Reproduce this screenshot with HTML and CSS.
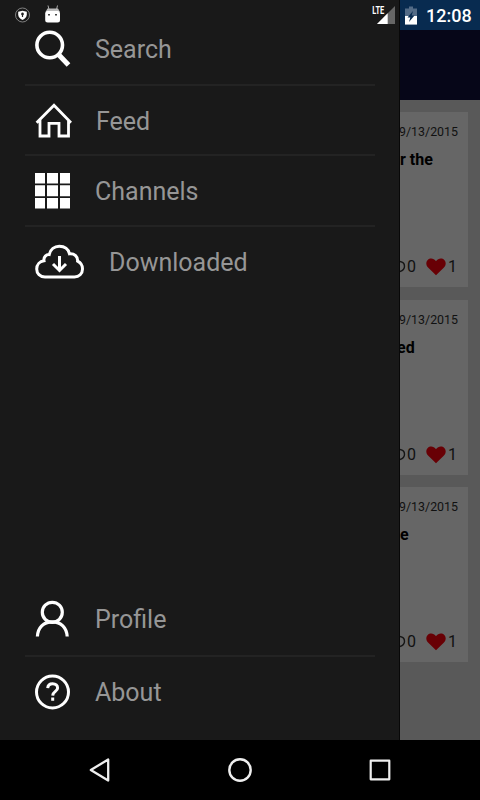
FILE: index.html
```html
<!DOCTYPE html>
<html lang="en">
<head>
    <meta charset="UTF-8">
    <title>Menu</title>
    <link rel="stylesheet" href="styles.css">
</head>
<body>
<div class="screen">
    <div class="main">
        <div class="drawer">
            <ul class="menu">
                <li class="search">
                    <svg width="36" height="38" viewBox="0 0 36 38" fill="none" stroke="#fff">
                        <circle cx="14.7" cy="15" r="12.8" stroke-width="3.6"/>
                        <path d="M23.5 24.5L33.5 35" stroke-width="5"/>
                    </svg>
                    <span>Search</span>
                </li>
                <li class="feed">
                    <svg width="37" height="36" viewBox="0 0 37 36" fill="none" stroke="#fff" stroke-width="2.8">
                        <path d="M1.6 20.8L19 3.2L36 20.8M5 18V34H14V21.3H24V34H33.5V18"/>
                    </svg>
                    <span>Feed</span>
                </li>
                <li class="channels">
                    <svg width="36" height="36" viewBox="0 0 36 36" fill="#fff">
                        <path d="M0 0h10v10.5H0zM12 0h11v10.5H12zM25 0h10v10.5H25zM0 12.3h10v11H0zM12 12.3h11v11H12zM25 12.3h10v11H25zM0 25h10v10.5H0zM12 25h11v10.5H12zM25 25h10v10.5H25z"/>
                    </svg>
                    <span>Channels</span>
                </li>
                <li class="downloaded">
                    <svg width="50" height="36" viewBox="0 0 50 36" fill="none" stroke="#fff" stroke-width="3">
                        <path d="M10 33C5 33 1.700 29.500 1.700 25C1.700 20.500 4.800 17.300 9 16.800C8.300 12.800 11.500 10.400 14.200 10.600C15.400 5.500 19.500 2.300 24.300 2.300C29.500 2.300 33.300 5.300 34.500 9.800C39.500 9.300 43 12.500 42.600 17.200C45.700 18.700 47.500 21.400 47.500 25C47.500 29.800 44 33 39.500 33Z"/>
                        <path d="M24.500 12V26M18 20L24.500 26.500L31 20"/>
                    </svg>
                    <span>Downloaded</span>
                </li>
            </ul>
            <ul class="menu bottom">
                <li class="profile">
                    <svg width="36" height="38" viewBox="0 0 36 38" fill="none" stroke="#fff" stroke-width="3.2">
                        <circle cx="17.300" cy="12.300" r="10"/>
                        <path d="M2.400 36.500C2.800 27.500 8.500 21.800 17.300 21.800C26 21.800 31.700 27.500 32.200 36.500"/>
                    </svg>
                    <span>Profile</span>
                </li>
                <li class="about">
                    <svg width="36" height="36" viewBox="0 0 36 36" fill="none" stroke="#fff" stroke-width="3">
                        <circle cx="17.500" cy="18" r="16"/>
                        <path d="M12.700 14.200C12.900 11.200 15 9.700 17.700 9.700C20.700 9.700 22.600 11.500 22.600 13.900C22.600 17.500 17.900 17.300 17.700 21.600M17.700 23.500V26.700"/>
                    </svg>
                    <span>About</span>
                </li>
            </ul>
        </div>
        <div class="page">
            <div class="top-strip"></div>
            <div class="header"></div>
            <div class="card">
                <p class="date">9/13/2015</p>
                <h2>r the</h2>
                <div class="counts">
                    <svg class="bubble" width="6" height="14" viewBox="0 0 6 14" fill="none" stroke="#151515" stroke-width="1.400"><path d="M0 1.500C6 2.500 6 9.500 0 11.500"/></svg>
                    <span class="replies">0</span>
                    <svg class="heart" width="20" height="18" viewBox="0 0 20 18" fill="#680005"><path d="M10 17.300L2.300 9.800C-.5 7 0 3.800 1.700 2C4-.2 7.800.2 10 3.200C12.200.2 16 -.2 18.300 2C20 3.800 20.500 7 17.700 9.800Z"/></svg>
                    <span>1</span>
                </div>
            </div>
            <div class="card">
                <p class="date">9/13/2015</p>
                <h2 class="cut">ed</h2>
                <div class="counts">
                    <svg class="bubble" width="6" height="14" viewBox="0 0 6 14" fill="none" stroke="#151515" stroke-width="1.400"><path d="M0 1.500C6 2.500 6 9.500 0 11.500"/></svg>
                    <span class="replies">0</span>
                    <svg class="heart" width="20" height="18" viewBox="0 0 20 18" fill="#680005"><path d="M10 17.300L2.300 9.800C-.5 7 0 3.800 1.700 2C4-.2 7.800.2 10 3.200C12.200.2 16 -.2 18.300 2C20 3.800 20.500 7 17.700 9.800Z"/></svg>
                    <span>1</span>
                </div>
            </div>
            <div class="card">
                <p class="date">9/13/2015</p>
                <h2>e</h2>
                <div class="counts">
                    <svg class="bubble" width="6" height="14" viewBox="0 0 6 14" fill="none" stroke="#151515" stroke-width="1.400"><path d="M0 1.500C6 2.500 6 9.500 0 11.500"/></svg>
                    <span class="replies">0</span>
                    <svg class="heart" width="20" height="18" viewBox="0 0 20 18" fill="#680005"><path d="M10 17.300L2.300 9.800C-.5 7 0 3.800 1.700 2C4-.2 7.800.2 10 3.200C12.200.2 16 -.2 18.300 2C20 3.800 20.500 7 17.700 9.800Z"/></svg>
                    <span>1</span>
                </div>
            </div>
        </div>
    </div>
    <div class="nav">
        <svg width="22" height="26" viewBox="0 0 22 26" fill="none" stroke="#eee" stroke-width="2.300" stroke-linejoin="round"><path d="M19.200 2.500V23.500L1.800 13Z"/></svg>
        <svg width="26" height="26" viewBox="0 0 26 26" fill="none" stroke="#eee" stroke-width="2.400"><circle cx="13" cy="13" r="10.700"/></svg>
        <svg width="22" height="22" viewBox="0 0 22 22" fill="none" stroke="#eee" stroke-width="2.200" stroke-linejoin="round"><path d="M1.700 1.700H20.300V20.300H1.700Z"/></svg>
    </div>
    <!-- system status icons, over the drawer -->
    <div class="status">
        <svg class="shield" width="16" height="16" viewBox="0 0 16 16">
            <circle cx="7.500" cy="8" r="7" fill="none" stroke="#999" stroke-width=".8"/>
            <path d="M7.500 3.700L11.800 4.700V7.500C11.800 10 10 12 7.500 13C5 12 3.200 10 3.200 7.500V4.700Z" fill="#fff"/>
            <path d="M7.500 5.500A1.500 1.500 0 0 1 8.100 8.300V10H6.900V8.300A1.500 1.500 0 0 1 7.500 5.500Z" fill="#222"/>
        </svg>
        <svg class="robot" width="16" height="18" viewBox="0 0 16 18">
            <path d="M4 4.500L3 .5M11.500 4.500L12.500 .5" stroke="#aaa" stroke-width="1"/>
            <path d="M.5 7L2.500 3.500H13L15 7Z" fill="#bbb"/>
            <rect x=".2" y="6" width="14.800" height="11.500" rx="2.500" fill="#fff"/>
            <path d="M3 9h2v1.500H3zM10 9h2v1.500H10z" fill="#444"/>
        </svg>
        <svg class="signal" width="24" height="20" viewBox="0 0 24 20">
            <path d="M5 19L23 1V19Z" fill="#666"/>
            <path d="M5 19L15.700 8.300V19Z" fill="#fff"/>
            <path d="M0 0H13V9.500H0Z" fill="#191919"/>
            <text x=".2" y="9" textLength="12" lengthAdjust="spacingAndGlyphs" class="lte">LTE</text>
        </svg>
        <svg class="battery" width="12" height="19" viewBox="0 0 12 19">
            <path d="M4 .5H8V2.500H12V18.500H0V2.500H4Z" fill="#536b86"/>
            <path d="M0 10H12V18.500H0Z" fill="#fff"/>
            <path d="M8 5L2.500 11.500H5.300L4 16L9.500 9.500H6.700Z" fill="#082b50"/>
        </svg>
        <span class="clock">12:08</span>
    </div>
</div>
</body>
</html>
```
FILE: styles.css
```css
* {
    margin: 0;
    padding: 0;
    box-sizing: border-box;
}

ul {
    list-style: none;
}

svg {
    display: block;
    flex: none;
}

body {
    background-color: #000;
    font-family: Roboto, "Liberation Sans", sans-serif;
}

.screen {
    width: 480px;
    height: 800px;
    position: relative;
    overflow: hidden;
}

.main {
    height: 740px;
    display: flex;
}

.drawer {
    width: 400px;
    padding: 13px 24px 12px 25px;
    background-color: #191919;
    border-right: 1px solid #080808;
    display: flex;
    flex-direction: column;
    justify-content: space-between;
}

.menu li {
    height: 71px;
    padding-left: 10px;
    display: flex;
    align-items: center;
    color: #969696;
    font-size: 25px;
    line-height: 30px;
    border-bottom: 2px solid #232323;
}

.menu li span {
    margin-left: 24px;
    padding-top: 2px;
}

.menu .search {
    height: 73px;
}

.menu .feed {
    height: 70px;
}

.menu .feed span {
    padding-top: 4px;
}

.menu .channels span {
    padding-top: 3px;
}

.menu .downloaded,
.menu .about {
    border-bottom: none;
}

.menu .downloaded {
    height: 70px;
}

.menu .about {
    padding-bottom: 1px;
}

/* ---- bottom items ---- */
.menu .profile {
    height: 75px;
}

/* ---- page behind the drawer ---- */
.page {
    width: 80px;
    background-color: #595959;
    overflow: hidden;
}

.top-strip {
    height: 30px;
    background-color: #082b50;
}

.header {
    height: 70px;
    margin-bottom: 12px;
    background-color: #060618;
}

.card {
    width: 68px;
    height: 175px;
    margin-bottom: 12.5px;
    padding: 12px 10px 10px 0;
    background-color: #666;
    color: #111;
    display: flex;
    flex-direction: column;
}

.date {
    font-size: 12.4px;
    line-height: 16px;
    display: flex;
    justify-content: flex-end;
}

.card h2 {
    margin-top: 9px;
    color: #000;
    font-size: 16px;
    line-height: 21px;
    font-weight: bold;
}

.card .cut {
    margin-left: -3px;
}

.counts {
    margin-top: auto;
    display: flex;
    align-items: center;
    font-size: 16px;
    line-height: 20px;
}

.replies {
    width: 10px;
    margin-left: 1px;
}

.heart {
    margin-left: 9px;
    margin-right: 2px;
}

.nav {
    height: 60px;
    padding: 0 89px;
    display: flex;
    align-items: center;
    justify-content: space-between;
}

.status {
    width: 480px;
    height: 30px;
    padding-left: 15px;
    position: absolute;
    top: 0;
    left: 0;
    display: flex;
    align-items: center;
}

.robot {
    margin-left: 14px;
    margin-bottom: 3px;
}

.signal {
    margin-left: 311px;
}

.lte {
    fill: #fff;
    font-size: 11px;
    font-weight: bold;
}

.battery {
    margin-left: 9px;
}

.clock {
    margin-left: 9px;
    padding-top: 2px;
    color: #fff;
    font-size: 18px;
    font-weight: 500;
    line-height: 30px;
}
```
